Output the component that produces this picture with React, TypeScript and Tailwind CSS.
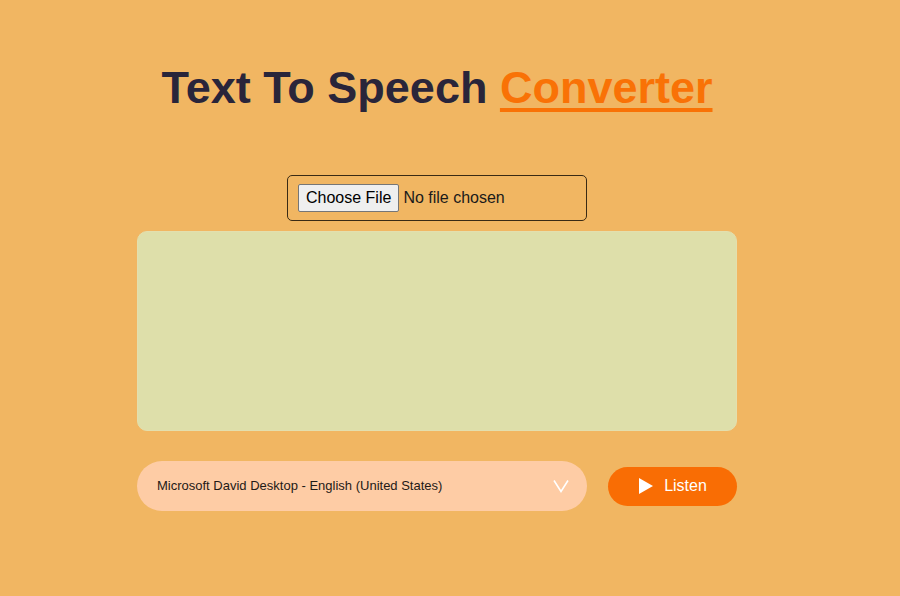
export default function App() {
  return (
    <div className="min-h-[596px] w-full bg-[#f1b662] pr-[26px] font-['Liberation_Sans',Arial,sans-serif]">
      <div className="mx-auto flex w-[600px] flex-col items-center pt-[62px]">
        <h1 className="text-[45px] leading-[52px] font-bold whitespace-nowrap text-[#29253a]">
          Text To Speech{" "}
          <span className="text-[#f97206] underline decoration-[4px] underline-offset-[5px]">
            Converter
          </span>
        </h1>

        <div className="mt-[61px] flex h-[46px] w-[300px] items-center rounded-[5px] border border-[#3a2a14] px-[10px]">
          <input
            type="file"
            className="text-[16px] text-[#1a1a1a] file:mr-[4px] file:rounded-[2px] file:border file:border-[#767676] file:bg-[#efefef] file:px-[7px] file:py-[1px] file:text-[16px] file:text-black"
          />
        </div>

        <textarea className="mt-[10px] h-[200px] w-[600px] resize-none rounded-[10px] border border-[#e3dfae] bg-[#dedfaa] p-3 outline-none" />

        <div className="mt-[30px] flex w-[600px] items-center gap-[21px]">
          <div className="relative h-[50px] w-[450px] rounded-full bg-[#fecca5]">
            <select className="h-full w-full appearance-none rounded-full bg-transparent pl-[20px] text-[13px] text-[#1f1a17] outline-none">
              <option>Microsoft David Desktop - English (United States)</option>
            </select>
            <svg
              className="pointer-events-none absolute top-[18px] right-[18px]"
              width="16"
              height="14"
              viewBox="0 0 16 14"
              fill="none"
              stroke="#ffffff"
              strokeWidth="1.6"
            >
              <path d="M1 1.5 L8 12.5 L15 1.5" />
            </svg>
          </div>
          <button className="flex h-[39px] w-[129px] items-center justify-center gap-[10px] rounded-full bg-[#f96d04] text-[16px] text-white">
            <svg width="16" height="18" viewBox="0 0 16 18" fill="#ffffff">
              <path d="M1 1 L15 9 L1 17 Z" />
            </svg>
            Listen
          </button>
        </div>
      </div>
    </div>
  );
}
